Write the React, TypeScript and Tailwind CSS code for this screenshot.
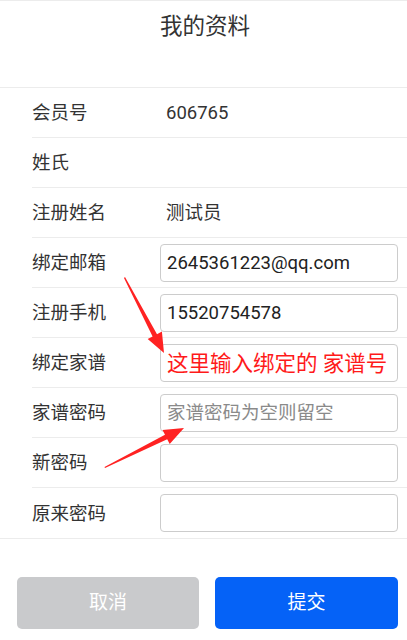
import React from "react";

const font = { fontFamily: 'Roboto, "Noto Sans CJK SC", sans-serif' };

type Row = { label: string; value?: string; input?: { value?: string; placeholder?: string; red?: boolean } };

const rows: Row[] = [
  { label: "会员号", value: "606765" },
  { label: "姓氏", value: "" },
  { label: "注册姓名", value: "测试员" },
  { label: "绑定邮箱", input: { value: "2645361223@qq.com" } },
  { label: "注册手机", input: { value: "15520754578" } },
  { label: "绑定家谱", input: { value: "这里输入绑定的 家谱号", red: true } },
  { label: "家谱密码", input: { placeholder: "家谱密码为空则留空" } },
  { label: "新密码", input: {} },
  { label: "原来密码", input: {} },
];

export default function App() {
  return (
    <div className="relative w-[407px] h-[640px] bg-white overflow-hidden text-[#333]" style={font}>
      <div className="h-[88px] border-t border-b border-[#ececec] flex justify-center pt-[9px]">
        <span className="text-[22.5px] leading-[32px] text-[#333] pl-[3px]">我的资料</span>
      </div>
      <div className="border-b border-[#ececec]">
        {rows.map((r, i) => (
          <div key={i} className={"ml-[32px] h-[50px] flex items-center pr-[9px] " + (i < rows.length - 1 ? "border-b border-[#ececec]" : "")}>
            <div className="w-[128px] shrink-0 text-[18.5px] text-[#333] pt-[3px]">{r.label}</div>
            {r.input ? (
              <div className="flex-1 h-[38px] border border-[#cccccc] rounded-[4px] flex items-center px-[6px] pt-[3px]">
                {r.input.value ? (
                  <span className={r.input.red ? "text-[21.5px] text-[#ff1a1a]" : "text-[18.5px] text-[#222]"}>
                    {r.input.value}
                  </span>
                ) : r.input.placeholder ? (
                  <span className="text-[18.5px] text-[#8a8a8a]">{r.input.placeholder}</span>
                ) : null}
              </div>
            ) : (
              <div className="pl-[6px] text-[18.5px] text-[#333] pt-[3px]">{r.value}</div>
            )}
          </div>
        ))}
      </div>
      <div className="flex gap-[16px] pl-[17px] pr-[9px] mt-[38px]">
        <button className="w-[182px] h-[52px] rounded-[5px] bg-[#c9cacc] text-white text-[19px]">取消</button>
        <button className="flex-1 h-[52px] rounded-[5px] bg-[#0562f7] text-white text-[19px]">提交</button>
      </div>
      <svg className="absolute left-0 top-0 pointer-events-none" width="407" height="640" viewBox="0 0 407 640">
        <polygon fill="#ff2222" points="125,277 157,334.2 161.9,331.6 164,353 147.7,339 152.6,336.5 124,278" />
        <polygon fill="#ff2222" points="105,468 167.2,439.2 169.7,444.1 184,428 162.5,429.9 165,434.8 104.5,467" />
      </svg>
    </div>
  );
}
